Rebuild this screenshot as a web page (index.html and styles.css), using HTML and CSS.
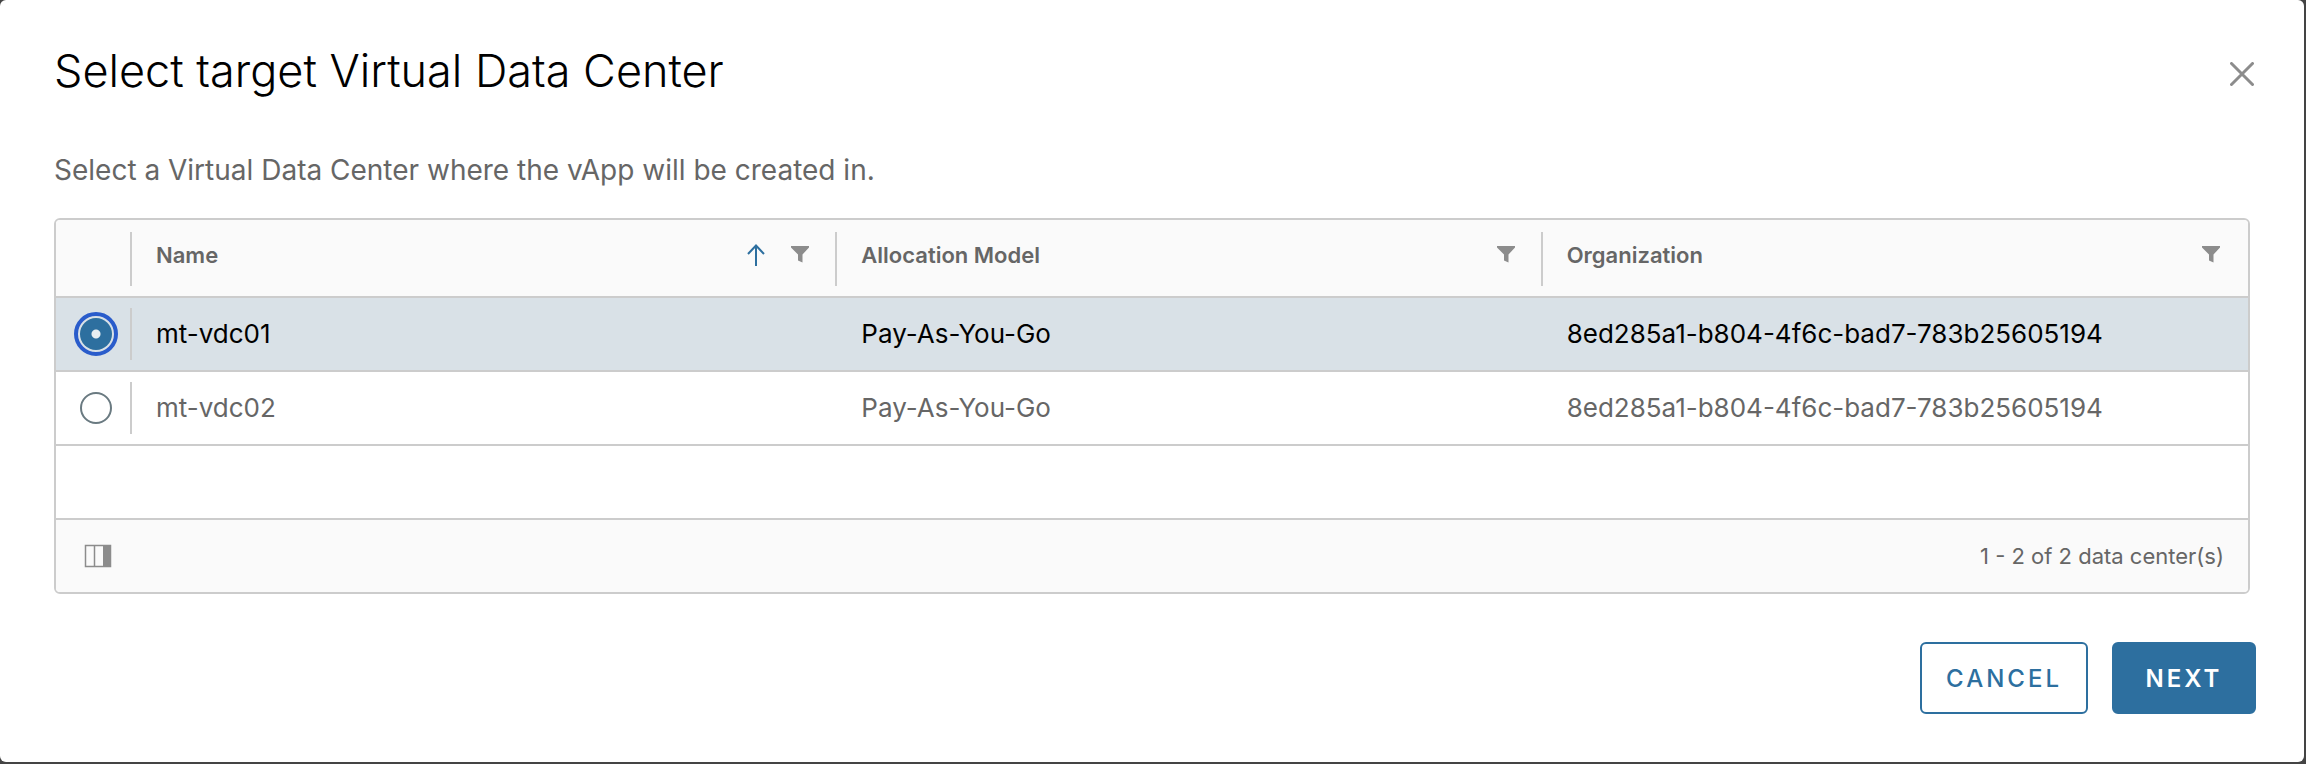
FILE: index.html
```html
<!DOCTYPE html>
<html lang="en">
<head>
    <meta charset="UTF-8">
    <meta name="viewport" content="width=device-width, initial-scale=1.0">
    <title>Select target Virtual Data Center</title>
    <link rel="stylesheet" href="styles.css">
</head>
<body>
    <form class="modal" role="dialog" aria-labelledby="modalTitle">
        <header class="modal-header">
            <h1 class="modal-title" id="modalTitle">Select target Virtual Data Center</h1>
            <button class="icon-btn" type="button" aria-label="Close">
                <svg width="24" height="24" viewBox="0 0 24 24"><path d="M1.5 1.5l21 21M22.5 1.5l-21 21" fill="none" stroke="#8c8c8c" stroke-width="3" stroke-linecap="round"/></svg>
            </button>
        </header>
        <p class="description">Select a Virtual Data Center where the vApp will be created in.</p>
        <div class="datagrid">
            <table class="grid-table">
                <thead>
                    <tr>
                        <th class="select-col"></th>
                        <th>
                            <div class="col-head">
                                <span class="col-title">Name</span>
                                <button class="icon-btn" type="button" aria-label="Sort by name">
                                    <svg width="18" height="22" viewBox="0 0 18 22"><path d="M9 22V1.5M1 10l8-8.5 8 8.5" fill="none" stroke="#2d6f9f" stroke-width="2"/></svg>
                                </button>
                                <button class="icon-btn" type="button" aria-label="Filter name">
                                    <svg width="18" height="22" viewBox="0 0 18 22"><path d="M0 2h18v1.500L11.500 10.500v8L7 16.500V10.500L0 3.500z" fill="#8c8c8c"/></svg>
                                </button>
                            </div>
                        </th>
                        <th>
                            <div class="col-head">
                                <span class="col-title">Allocation Model</span>
                                <button class="icon-btn" type="button" aria-label="Filter allocation model">
                                    <svg width="18" height="22" viewBox="0 0 18 22"><path d="M0 2h18v1.500L11.500 10.500v8L7 16.500V10.500L0 3.500z" fill="#8c8c8c"/></svg>
                                </button>
                            </div>
                        </th>
                        <th>
                            <div class="col-head">
                                <span class="col-title">Organization</span>
                                <button class="icon-btn" type="button" aria-label="Filter organization">
                                    <svg width="18" height="22" viewBox="0 0 18 22"><path d="M0 2h18v1.500L11.500 10.500v8L7 16.500V10.500L0 3.500z" fill="#8c8c8c"/></svg>
                                </button>
                            </div>
                        </th>
                    </tr>
                </thead>
                <tbody>
                    <tr class="selected">
                        <td class="select-col"><input class="radio" type="radio" name="vdc" id="vdc01" checked></td>
                        <td><label for="vdc01">mt-vdc01</label></td>
                        <td>Pay-As-You-Go</td>
                        <td>8ed285a1-b804-4f6c-bad7-783b25605194</td>
                    </tr>
                    <tr>
                        <td class="select-col"><input class="radio" type="radio" name="vdc" id="vdc02"></td>
                        <td><label for="vdc02">mt-vdc02</label></td>
                        <td>Pay-As-You-Go</td>
                        <td>8ed285a1-b804-4f6c-bad7-783b25605194</td>
                    </tr>
                </tbody>
            </table>
            <div class="grid-footer">
                <button class="icon-btn" type="button" aria-label="Show columns">
                    <svg width="28" height="24" viewBox="0 0 28 24"><path d="M19 1h7.500v22H19z" fill="#8c8c8c"/><path d="M1.500 1.500h25v21h-25zM10.500 1.500v21" fill="none" stroke="#8c8c8c" stroke-width="1.500"/></svg>
                </button>
                <span>1 - 2 of 2 data center(s)</span>
            </div>
        </div>
        <footer class="modal-footer">
            <button class="btn" type="button">CANCEL</button>
            <button class="btn btn-primary" type="submit">NEXT</button>
        </footer>
    </form>
</body>
</html>
```
FILE: styles.css
```css
* {
    box-sizing: border-box;
}
body {
    margin: 0;
    min-height: 100vh;
    padding: 0 2px 2px 0;
    display: flex;
    background: #444444;
    font-family: Inter, "Open Sans", sans-serif;
    color: #666666;
}
.modal {
    flex: 1;
    padding: 42px 54px 48px;
    background: #ffffff;
    border-radius: 6px;
}
.modal-header {
    display: flex;
    justify-content: space-between;
    align-items: flex-end;
}
.modal-title {
    margin: 0;
    font-size: 45px;
    line-height: 58px;
    font-weight: 300;
    color: #000000;
}
.icon-btn {
    display: flex;
    padding: 0;
    border: 0;
    background: none;
    cursor: pointer;
}
.modal-header .icon-btn {
    margin: 0 -4px 14px 0;
}
.description {
    margin: 52px 0 30px;
    font-size: 28px;
    line-height: 36px;
}
.datagrid {
    border: 2px solid #cccccc;
    border-radius: 6px;
    overflow: hidden;
}
.grid-table {
    width: 100%;
    table-layout: fixed;
    border-collapse: separate;
    border-spacing: 0;
    border-bottom: 72px solid #ffffff;
    font-size: 26px;
}
th,
td {
    position: relative;
    height: 74px;
    padding: 0 24px 2px;
    border-bottom: 2px solid #cccccc;
    text-align: left;
}
th {
    height: 78px;
    padding-bottom: 6px;
    background: #fafafa;
    font-size: 22px;
    font-weight: 600;
}
/* separators between the columns */
th:not(:last-child)::after,
.select-col::after {
    content: '';
    position: absolute;
    top: 10px;
    bottom: 10px;
    right: 0;
    width: 2px;
    background: #cccccc;
}
th:not(:last-child)::after {
    top: 12px;
}
.select-col {
    width: 76px;
    padding: 0 24px;
}
.selected td {
    background: #d9e1e7;
    color: #000000;
}
.col-head {
    display: flex;
    align-items: center;
    gap: 26px;
}
.col-title {
    flex: 1;
}
.col-head .icon-btn:last-child {
    margin-right: 4px;
}
.radio {
    display: block;
    appearance: none;
    width: 32px;
    height: 32px;
    margin: 0;
    border: 2px solid #6a7a81;
    border-radius: 50%;
    background: #ffffff;
}
.radio:checked {
    border: 0;
    background: radial-gradient(circle, #e8eef2 4px, #2d6f9f 5px);
    outline: 4px solid #2a5ccb;
    outline-offset: 2px;
}
.grid-footer {
    display: flex;
    justify-content: space-between;
    align-items: center;
    height: 74px;
    padding: 0 24px 0 28px;
    border-top: 2px solid #cccccc;
    background: #fafafa;
    font-size: 22px;
}
.modal-footer {
    display: flex;
    justify-content: flex-end;
    gap: 24px;
    margin: 48px -6px 0 0;
}
.btn {
    height: 72px;
    min-width: 144px;
    padding: 0 24px;
    border: 2px solid #2d6f9f;
    border-radius: 6px;
    background: #ffffff;
    color: #2d6f9f;
    font-family: inherit;
    font-size: 24px;
    font-weight: 500;
    letter-spacing: 3px;
    cursor: pointer;
}
.btn-primary {
    background: #2d6f9f;
    color: #ffffff;
    font-weight: 600;
}
```
